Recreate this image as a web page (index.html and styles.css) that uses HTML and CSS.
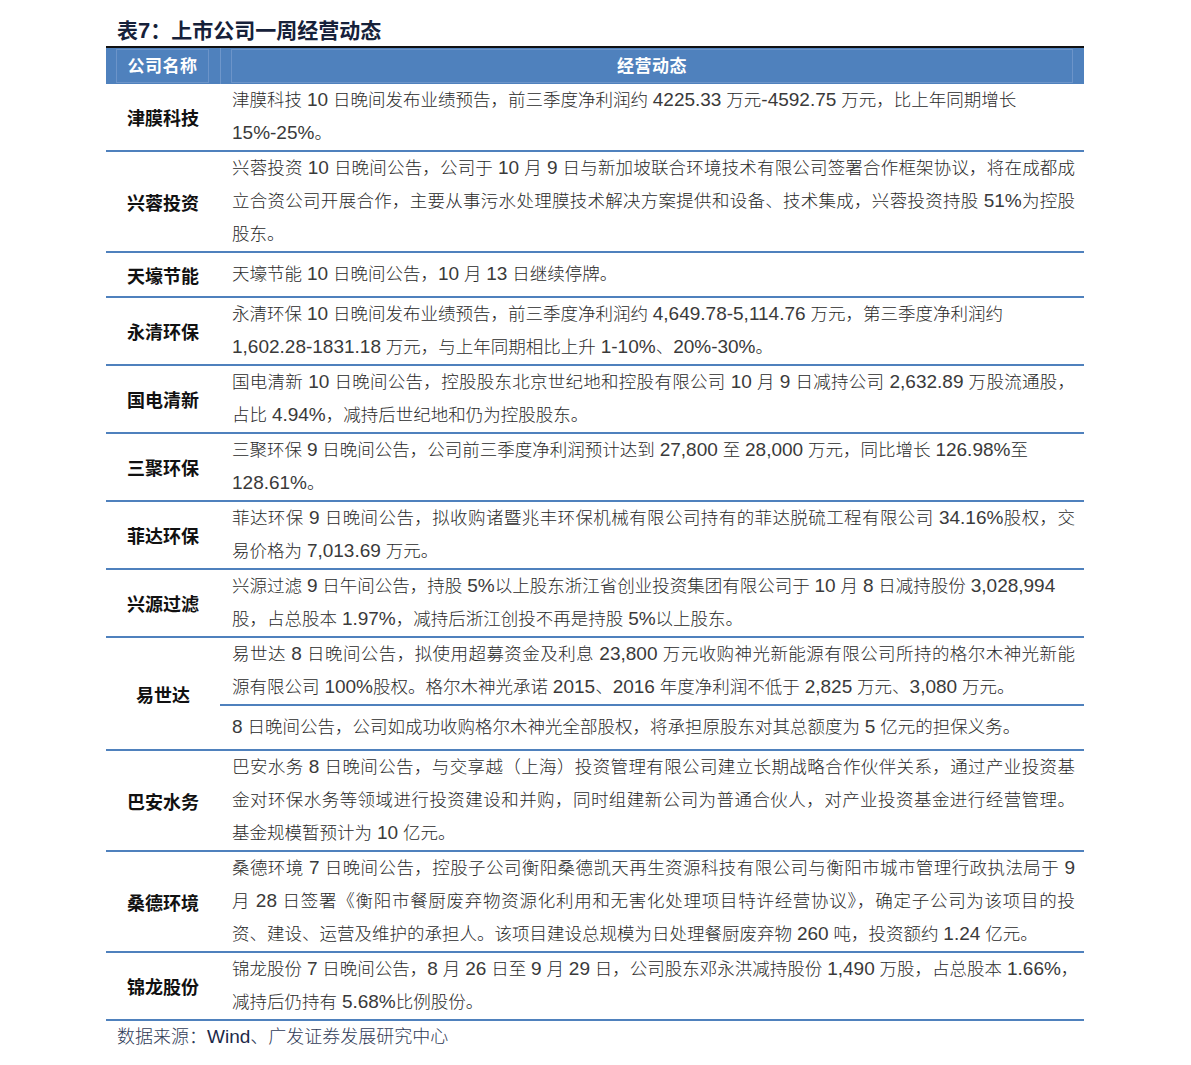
FILE: index.html
```html
<!DOCTYPE html>
<html lang="zh-CN">
<head>
<meta charset="utf-8">
<title>表7：上市公司一周经营动态</title>
<link rel="stylesheet" href="styles.css">
</head>
<body>
<div class="report">
  <div class="title">表<span class="tn">7</span>：上市公司一周经营动态</div>
  <table class="ops">
    <colgroup><col class="c1"><col class="c2"></colgroup>
    <thead>
      <tr>
        <th class="h1"><div class="frame">公司名称</div></th>
        <th class="h2"><div class="frame">经营动态</div></th>
      </tr>
    </thead>
    <tbody>
      <tr>
        <td class="name">津膜科技</td>
        <td class="desc">
          <span class="ln">津膜科技 <span class="n">10</span> 日晚间发布业绩预告，前三季度净利润约 <span class="n">4225.33</span> 万元<span class="n">-4592.75</span> 万元，比上年同期增长</span>
          <span class="ln"><span class="n">15%-25%</span>。</span>
        </td>
      </tr>
      <tr>
        <td class="name">兴蓉投资</td>
        <td class="desc">
          <span class="ln full">兴蓉投资 <span class="n">10</span> 日晚间公告，公司于 <span class="n">10</span> 月 <span class="n">9</span> 日与新加坡联合环境技术有限公司签署合作框架协议，将在成都成</span>
          <span class="ln full">立合资公司开展合作，主要从事污水处理膜技术解决方案提供和设备、技术集成，兴蓉投资持股 <span class="n">51%</span>为控股</span>
          <span class="ln">股东。</span>
        </td>
      </tr>
      <tr>
        <td class="name">天壕节能</td>
        <td class="desc">
          <span class="ln one">天壕节能 <span class="n">10</span> 日晚间公告，<span class="n">10</span> 月 <span class="n">13</span> 日继续停牌。</span>
        </td>
      </tr>
      <tr>
        <td class="name">永清环保</td>
        <td class="desc">
          <span class="ln">永清环保 <span class="n">10</span> 日晚间发布业绩预告，前三季度净利润约 <span class="n">4,649.78-5,114.76</span> 万元，第三季度净利润约</span>
          <span class="ln"><span class="n">1,602.28-1831.18</span> 万元，与上年同期相比上升 <span class="n">1-10%</span>、<span class="n">20%-30%</span>。</span>
        </td>
      </tr>
      <tr>
        <td class="name">国电清新</td>
        <td class="desc">
          <span class="ln full">国电清新 <span class="n">10</span> 日晚间公告，控股股东北京世纪地和控股有限公司 <span class="n">10</span> 月 <span class="n">9</span> 日减持公司 <span class="n">2,632.89</span> 万股流通股，</span>
          <span class="ln">占比 <span class="n">4.94%</span>，减持后世纪地和仍为控股股东。</span>
        </td>
      </tr>
      <tr>
        <td class="name">三聚环保</td>
        <td class="desc">
          <span class="ln">三聚环保 <span class="n">9</span> 日晚间公告，公司前三季度净利润预计达到 <span class="n">27,800</span> 至 <span class="n">28,000</span> 万元，同比增长 <span class="n">126.98%</span>至</span>
          <span class="ln"><span class="n">128.61%</span>。</span>
        </td>
      </tr>
      <tr>
        <td class="name">菲达环保</td>
        <td class="desc">
          <span class="ln full">菲达环保 <span class="n">9</span> 日晚间公告，拟收购诸暨兆丰环保机械有限公司持有的菲达脱硫工程有限公司 <span class="n">34.16%</span>股权，交</span>
          <span class="ln">易价格为 <span class="n">7,013.69</span> 万元。</span>
        </td>
      </tr>
      <tr>
        <td class="name">兴源过滤</td>
        <td class="desc">
          <span class="ln">兴源过滤 <span class="n">9</span> 日午间公告，持股 <span class="n">5%</span>以上股东浙江省创业投资集团有限公司于 <span class="n">10</span> 月 <span class="n">8</span> 日减持股份 <span class="n">3,028,994</span></span>
          <span class="ln">股，占总股本 <span class="n">1.97%</span>，减持后浙江创投不再是持股 <span class="n">5%</span>以上股东。</span>
        </td>
      </tr>
      <tr>
        <td class="name" rowspan="2">易世达</td>
        <td class="desc">
          <span class="ln full">易世达 <span class="n">8</span> 日晚间公告，拟使用超募资金及利息 <span class="n">23,800</span> 万元收购神光新能源有限公司所持的格尔木神光新能</span>
          <span class="ln">源有限公司 <span class="n">100%</span>股权。格尔木神光承诺 <span class="n">2015</span>、<span class="n">2016</span> 年度净利润不低于 <span class="n">2,825</span> 万元、<span class="n">3,080</span> 万元。</span>
        </td>
      </tr>
      <tr>
        <td class="desc">
          <span class="ln one"><span class="n">8</span> 日晚间公告，公司如成功收购格尔木神光全部股权，将承担原股东对其总额度为 <span class="n">5</span> 亿元的担保义务。</span>
        </td>
      </tr>
      <tr>
        <td class="name">巴安水务</td>
        <td class="desc">
          <span class="ln full">巴安水务 <span class="n">8</span> 日晚间公告，与交享越（上海）投资管理有限公司建立长期战略合作伙伴关系，通过产业投资基</span>
          <span class="ln full">金对环保水务等领域进行投资建设和并购，同时组建新公司为普通合伙人，对产业投资基金进行经营管理。</span>
          <span class="ln">基金规模暂预计为 <span class="n">10</span> 亿元。</span>
        </td>
      </tr>
      <tr>
        <td class="name">桑德环境</td>
        <td class="desc">
          <span class="ln full">桑德环境 <span class="n">7</span> 日晚间公告，控股子公司衡阳桑德凯天再生资源科技有限公司与衡阳市城市管理行政执法局于 <span class="n">9</span></span>
          <span class="ln full">月 <span class="n">28</span> 日签署《衡阳市餐厨废弃物资源化利用和无害化处理项目特许经营协议》，确定子公司为该项目的投</span>
          <span class="ln">资、建设、运营及维护的承担人。该项目建设总规模为日处理餐厨废弃物 <span class="n">260</span> 吨，投资额约 <span class="n">1.24</span> 亿元。</span>
        </td>
      </tr>
      <tr>
        <td class="name">锦龙股份</td>
        <td class="desc">
          <span class="ln">锦龙股份 <span class="n">7</span> 日晚间公告，<span class="n">8</span> 月 <span class="n">26</span> 日至 <span class="n">9</span> 月 <span class="n">29</span> 日，公司股东邓永洪减持股份 <span class="n">1,490</span> 万股，占总股本 <span class="n">1.66%</span>，</span>
          <span class="ln">减持后仍持有 <span class="n">5.68%</span>比例股份。</span>
        </td>
      </tr>
    </tbody>
  </table>
  <div class="source">数据来源：<span class="sn">Wind</span>、广发证券发展研究中心</div>
</div>
</body>
</html>
```

FILE: styles.css
```css
html, body {
  margin: 0;
  padding: 0;
  background: #ffffff;
}

body {
  font-family: "Liberation Sans", "Noto Sans CJK SC", sans-serif;
  color: #1e1e1e;
}

.report {
  margin-left: 106px;
  width: 978px;
  padding-top: 15px;
}

.title {
  height: 31px;
  line-height: 31px;
  padding-left: 11px;
  font-size: 21px;
  font-weight: 700;
  color: #16213a;
}

.title .tn {
  font-size: 22px;
}

.ops {
  width: 978px;
  table-layout: fixed;
  border-collapse: separate;
  border-spacing: 0;
  border-top: 2px solid #111111;
}

.ops col.c1 {
  width: 114px;
}

.ops col.c2 {
  width: 864px;
}

.ops th {
  background: #4f81bd;
  height: 36px;
  padding: 0;
  color: #ffffff;
  font-size: 17px;
  font-weight: 700;
  vertical-align: top;
}

.ops th.h2 {
  border-left: 1px solid #6f97cb;
}

.ops th .frame {
  box-sizing: border-box;
  height: 34px;
  margin: 1px 11px 0 10px;
  border: 1px solid #6c94c9;
  display: flex;
  align-items: center;
  justify-content: center;
  letter-spacing: 0.5px;
  padding-bottom: 3px;
}

.ops th.h2 .frame {
  margin-left: 10px;
}

.ops td {
  padding: 0;
  border-bottom: 2px solid #4f81bd;
  vertical-align: middle;
}

.ops td.name {
  text-align: center;
  font-size: 18px;
  font-weight: 700;
  color: #111111;
}

.ops td.desc {
  padding: 0 9px 0 12px;
  font-size: 17.5px;
  font-weight: 300;
  line-height: 33px;
  color: #2a2a2a;
}

.ln {
  display: block;
  white-space: nowrap;
}

.ln.full {
  text-align: justify;
  text-align-last: justify;
}

.ln.one {
  padding: 5px 0;
}

.n {
  font-size: 19px;
  font-weight: 400;
  line-height: 1;
  color: #3a3a3a;
}

.source {
  padding-left: 11px;
  line-height: 32px;
  font-size: 18px;
  font-weight: 300;
  color: #2f3b57;
}

.source .sn {
  font-size: 19px;
  font-weight: 400;
  color: #1d2a4a;
}
```
